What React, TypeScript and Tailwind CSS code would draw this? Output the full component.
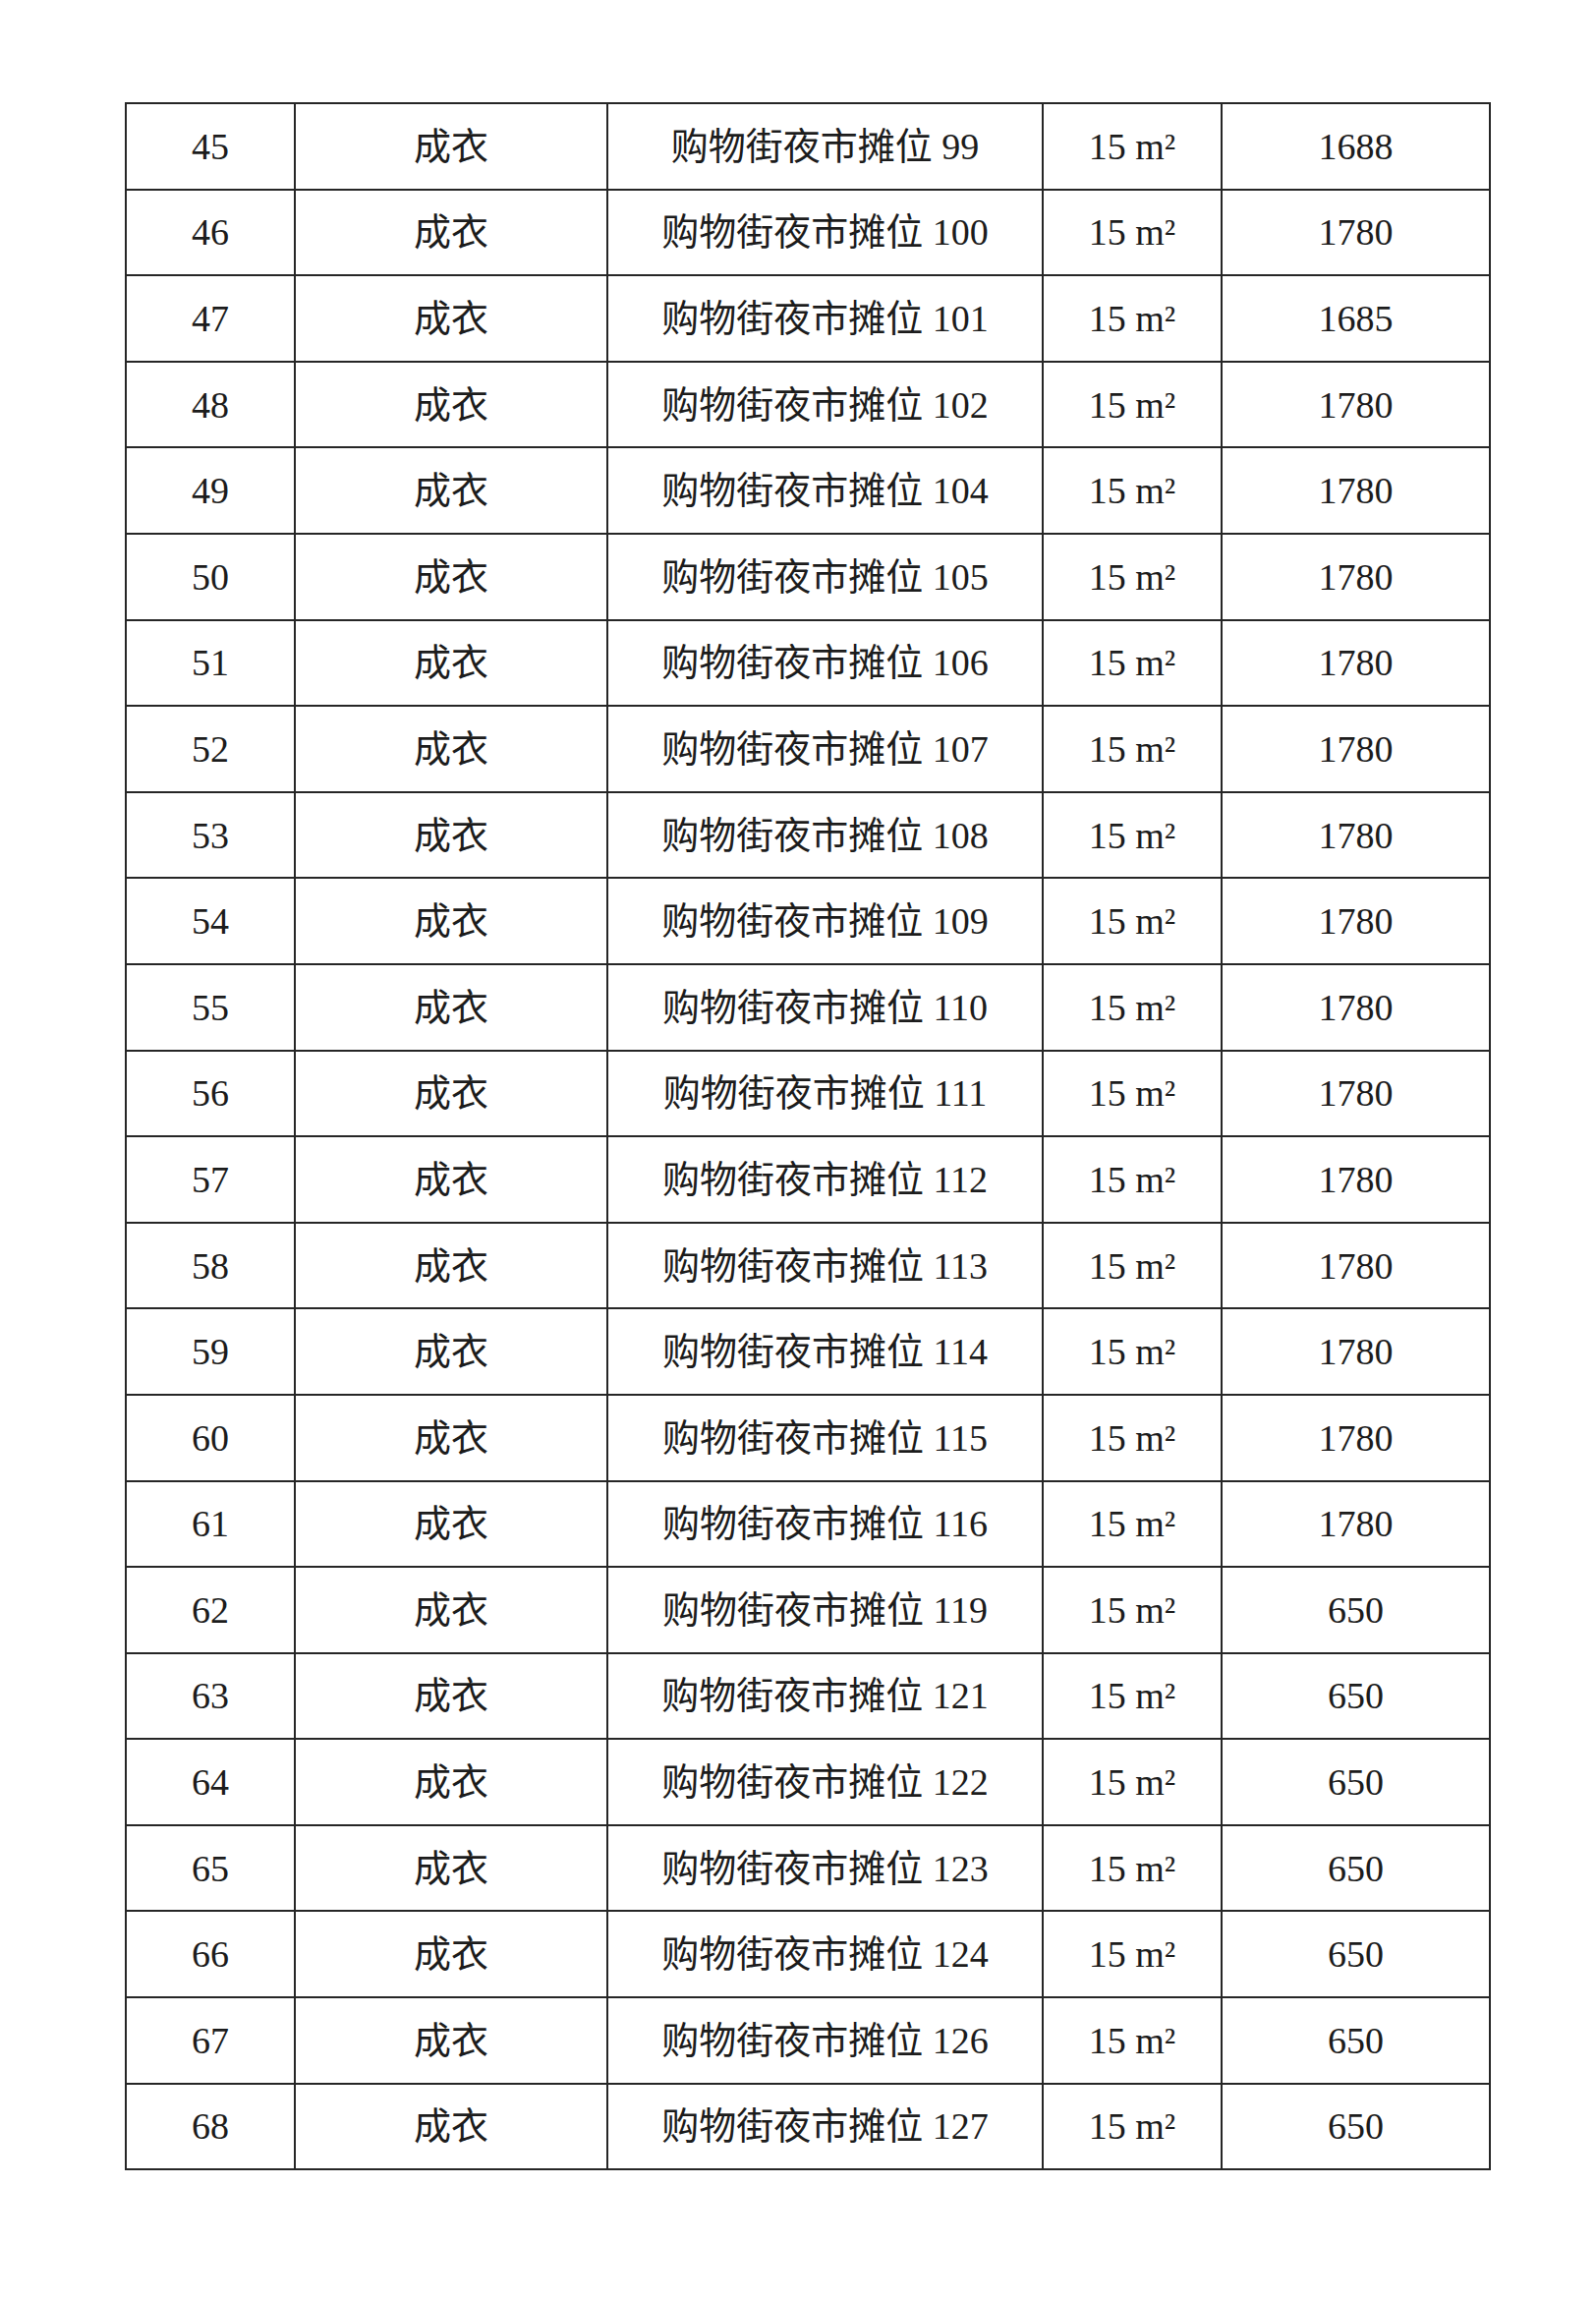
import React from 'react';

const rows: [number, number, number][] = [
  [45, 99, 1688],
  [46, 100, 1780],
  [47, 101, 1685],
  [48, 102, 1780],
  [49, 104, 1780],
  [50, 105, 1780],
  [51, 106, 1780],
  [52, 107, 1780],
  [53, 108, 1780],
  [54, 109, 1780],
  [55, 110, 1780],
  [56, 111, 1780],
  [57, 112, 1780],
  [58, 113, 1780],
  [59, 114, 1780],
  [60, 115, 1780],
  [61, 116, 1780],
  [62, 119, 650],
  [63, 121, 650],
  [64, 122, 650],
  [65, 123, 650],
  [66, 124, 650],
  [67, 126, 650],
  [68, 127, 650],
];

const cell = 'border-2 border-[#262626] text-center align-middle p-0';

const App = () => {
  return (
    <div
      className="w-[1624px] h-[2341px] bg-white pt-[104px] pl-[127px] text-[#1c1c1c]"
      style={{ fontFamily: '"Liberation Serif", "Noto Sans CJK SC", serif' }}
    >
      <table className="w-[1388px] border-collapse table-fixed text-[38px] leading-none">
        <colgroup>
          <col className="w-[172px]" />
          <col className="w-[318px]" />
          <col className="w-[443px]" />
          <col className="w-[182px]" />
          <col className="w-[273px]" />
        </colgroup>
        <tbody>
          {rows.map(([no, stall, price]) => (
            <tr key={no} className="h-[87.6px]">
              <td className={cell}>{no}</td>
              <td className={cell}>成衣</td>
              <td className={cell}>购物街夜市摊位 {stall}</td>
              <td className={cell}>15 m²</td>
              <td className={cell}>{price}</td>
            </tr>
          ))}
        </tbody>
      </table>
    </div>
  );
};

export default App;
